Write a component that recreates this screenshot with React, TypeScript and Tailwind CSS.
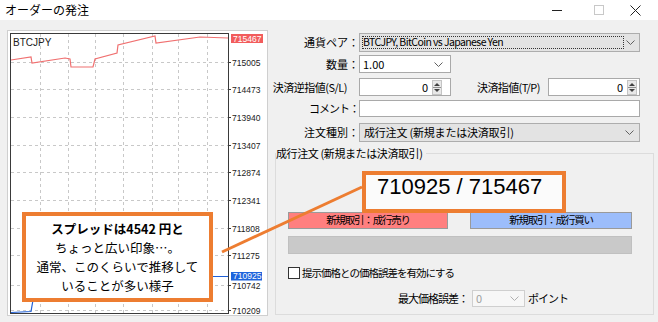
import React from "react";

const jp = "font-['Noto_Sans_CJK_JP','Noto_Sans',sans-serif]";

function Chevron({ c = "#606060" }: { c?: string }) {
  return (
    <svg width="9" height="5" viewBox="0 0 9 5">
      <path d="M0.5 0.5 L4.5 4.5 L8.5 0.5" fill="none" stroke={c} strokeWidth="1" />
    </svg>
  );
}

function Spin() {
  return (
    <svg width="10" height="15" viewBox="0 0 10 15">
      <rect x="0.5" y="0.5" width="9" height="14" fill="#e8e8e8" stroke="#c4c4c4" />
      <path d="M2 6 L5 3 L8 6 Z" fill="#404040" />
      <line x1="1" x2="9" y1="7.5" y2="7.5" stroke="#909090" />
      <path d="M2 9 L8 9 L5 12 Z" fill="#404040" />
    </svg>
  );
}

const levels: [number, string][] = [
  [62, "715005"],
  [89, "714473"],
  [117, "713940"],
  [145, "713407"],
  [172, "712874"],
  [200, "712341"],
  [228, "711808"],
  [255, "711275"],
  [285, "710742"],
  [310, "710209"],
];
const vx = [40, 68, 95, 123, 152, 178, 207];

function Chart() {
  const ox = 7;
  const oy = 30;
  const lf = "'Liberation Sans', Arial, sans-serif";
  return (
    <svg width="261" height="286" viewBox="0 0 261 286" className="block">
      <rect x="0.5" y="0.5" width="260" height="285" fill="#ffffff" stroke="#cfcfcf" />
      {levels.map(([y]) => (
        <line key={"h" + y} x1="4" x2="221" y1={y - oy + 0.5} y2={y - oy + 0.5} stroke="#c8c8c8" strokeDasharray="3 3" />
      ))}
      {vx.map((x) => (
        <line key={"v" + x} x1={x - ox + 0.5} x2={x - ox + 0.5} y1="4" y2="283" stroke="#c8c8c8" strokeDasharray="3 3" />
      ))}
      <rect x="3.5" y="3.5" width="218" height="280" fill="none" stroke="#3a3a3a" />
      {levels.map(([y, t]) => (
        <g key={"l" + t}>
          <line x1="221" x2="224" y1={y - oy + 0.5} y2={y - oy + 0.5} stroke="#3a3a3a" />
          <text x="225" y={y - oy + 3.5} fontSize="8.5" fontFamily={lf} fill="#222">
            {t}
          </text>
        </g>
      ))}
      <text x="6" y="16" fontSize="10" fontFamily={lf} fill="#202020">
        BTCJPY
      </text>
      <path
        d="M4 30 L24 27 L25 33 L58 28 L63 29 L64 37 L86 37 L88 29 L110 23 L111 15 L148 6 L149 13 L193 7 L221 8"
        fill="none"
        stroke="#f07070"
        strokeWidth="1.2"
      />
      <path d="M4 282.5 L24 281.5 L26 270" fill="none" stroke="#1f5fd6" strokeWidth="1.2" />
      <line x1="193" x2="221" y1="246.5" y2="246.5" stroke="#1f5fd6" />
      <rect x="224" y="4" width="32" height="9" fill="#f25c5c" />
      <text x="226" y="11.5" fontSize="8.5" fontFamily={lf} fill="#ffffff">
        715467
      </text>
      <rect x="224" y="242" width="31" height="8.5" fill="#1e64dc" />
      <text x="226" y="249.3" fontSize="8.5" fontFamily={lf} fill="#ffffff">
        710925
      </text>
    </svg>
  );
}

function Label({ children, w = 84, t = "" }: { children: React.ReactNode; w?: number; t?: string }) {
  return (
    <div className={`flex items-center justify-end text-[11px] text-black whitespace-nowrap ${t}`} style={{ width: w }}>
      {children}
    </div>
  );
}

export default function App() {
  return (
    <div className={`relative w-[658px] h-[322px] overflow-hidden bg-[#f0f0f0] text-black ${jp}`}>
      {/* title bar */}
      <div className="h-[20px] bg-white flex items-center">
        <span className="ml-[5px] text-[12px] leading-none">オーダーの発注</span>
        <div className="ml-auto flex items-center">
          <div className="w-[10px] h-px bg-[#222]" />
          <div className="ml-[32px] w-[10px] h-[10px] border border-[#c8c8c8]" />
          <svg className="ml-[26px] mr-[17px]" width="11" height="11" viewBox="0 0 11 11">
            <path d="M0.5 0.5 L10.5 10.5 M10.5 0.5 L0.5 10.5" stroke="#222" strokeWidth="1" />
          </svg>
        </div>
      </div>

      <div className="flex">
        <div className="pl-[7px] pt-[10px]">
          <Chart />
        </div>

        <div className="ml-[7px] w-[380px] flex flex-col">
          {/* row 1 */}
          <div className="flex mt-[13px] h-[19px]">
            <Label>通貨ペア：</Label>
            <div className="relative w-[281px] border border-[#adadad] bg-[#e3e3e3] flex items-center">
              <div className="absolute left-[2px] top-[2px] bottom-[2px] right-[15px] border border-dotted border-[#333]" />
              <span className="pl-[3px] text-[10.5px] tracking-[-0.6px] leading-none">BTCJPY, BitCoin vs Japanese Yen</span>
              <div className="ml-auto mr-[4px] flex">
                <Chevron />
              </div>
            </div>
          </div>
          {/* row 2 */}
          <div className="flex mt-[3px] h-[18px]">
            <Label>数量：</Label>
            <div className="w-[92px] border border-[#a9a9a9] bg-white flex items-center">
              <span className="pl-[3px] text-[11px] leading-none">1.00</span>
              <div className="ml-auto mr-[7px] flex">
                <Chevron />
              </div>
            </div>
          </div>
          {/* row 3 */}
          <div className="flex mt-[5px] h-[18px]">
            <Label w={72} t="tracking-[-0.5px]">決済逆指値(S/L)</Label>
            <div className="ml-[12px] w-[92px] border border-[#a9a9a9] bg-white flex items-center justify-end pr-[8px] gap-[4px]">
              <span className="text-[11px] leading-none">0</span>
              <Spin />
            </div>
            <div className="w-[97px] pl-[26px] flex items-center text-[11px] tracking-[-0.6px] whitespace-nowrap">決済指値(T/P)</div>
            <div className="w-[92px] border border-[#a9a9a9] bg-white flex items-center justify-end pr-[2px] gap-[4px]">
              <span className="text-[11px] leading-none">0</span>
              <Spin />
            </div>
          </div>
          {/* row 4 */}
          <div className="flex mt-[4px] h-[17px]">
            <Label t="tracking-[-1px]">コメント：</Label>
            <div className="w-[281px] border border-[#a9a9a9] bg-white" />
          </div>
          {/* row 5 */}
          <div className="flex mt-[6px] h-[19px]">
            <Label>注文種別：</Label>
            <div className="w-[281px] border border-[#adadad] bg-[#e3e3e3] flex items-center">
              <span className="pl-[4px] text-[11px] tracking-[-0.2px] leading-none">成行注文 (新規または決済取引)</span>
              <div className="ml-auto mr-[5px] flex">
                <Chevron />
              </div>
            </div>
          </div>

          {/* group box */}
          <div className="relative mt-[11px] w-[379px] h-[162px] border border-[#dcdcdc]">
            <div className="absolute -top-[8px] left-0 bg-[#f0f0f0] pr-[3px] text-[11px] tracking-[-0.4px] leading-[14px]">
              成行注文 (新規または決済取引)
            </div>
            <div className="pl-[12px] pt-[58px] flex flex-col">
              <div className="flex gap-[22px] h-[17px]">
                <div className="w-[160px] bg-[#ff7f7f] border border-[#9a9a9a] flex items-center justify-center text-[10.5px] tracking-[-1.2px] leading-none">
                  新規取引：成行売り
                </div>
                <div className="w-[162px] bg-[#9cbdfb] border border-[#9a9a9a] flex items-center justify-center text-[10.5px] tracking-[-1.2px] leading-none">
                  新規取引：成行買い
                </div>
              </div>
              <div className="mt-[7px] w-[344px] h-[18px] bg-[#c9c9c9] border border-[#c0c0c0]" />
              <div className="mt-[12px] h-[14px] flex items-center">
                <div className="w-[12px] h-[12px] border border-[#333] bg-white" />
                <span className="ml-[2px] text-[10.5px] tracking-[-1px] leading-none">提示価格との価格誤差を有効にする</span>
              </div>
              <div className="mt-[10px] h-[17px] flex items-center">
                <div className="w-[184px] pr-[4px] flex justify-end text-[11px] tracking-[-1px] leading-none">最大価格誤差：</div>
                <div className="w-[53px] h-[17px] border border-[#cfcfcf] bg-[#f7f7f7] flex items-center">
                  <span className="pl-[3px] text-[11px] leading-none text-[#a0a0a0]">0</span>
                  <div className="ml-auto mr-[5px] flex">
                    <Chevron c="#b0b0b0" />
                  </div>
                </div>
                <span className="ml-[3px] text-[11px] tracking-[-1px] leading-none">ポイント</span>
              </div>
            </div>
          </div>
        </div>
      </div>

      {/* callout 1 */}
      <div className="absolute left-[22px] top-[212px] w-[191px] h-[90px] border-[4px] border-[#ed7d31] bg-white flex flex-col items-center justify-center text-[12.5px] leading-[19px]">
        <span className="font-bold">スプレッドは4542 円と</span>
        <span>ちょっと広い印象…。</span>
        <span>通常、このくらいで推移して</span>
        <span>いることが多い様子</span>
      </div>

      {/* callout 2 */}
      <div className="absolute left-[362px] top-[171px] w-[204px] h-[42px] border-[4px] border-[#ed7d31] bg-[#fbfbfb] pl-[11px]">
        <span className="font-['Liberation_Sans',Arial,sans-serif] text-[22px] leading-[24px]">710925 / 715467</span>
      </div>

      {/* connector */}
      <svg className="absolute left-0 top-0 pointer-events-none" width="658" height="322">
        <line x1="222" y1="252" x2="362" y2="187" stroke="#ed7d31" strokeWidth="3" />
      </svg>
    </div>
  );
}
